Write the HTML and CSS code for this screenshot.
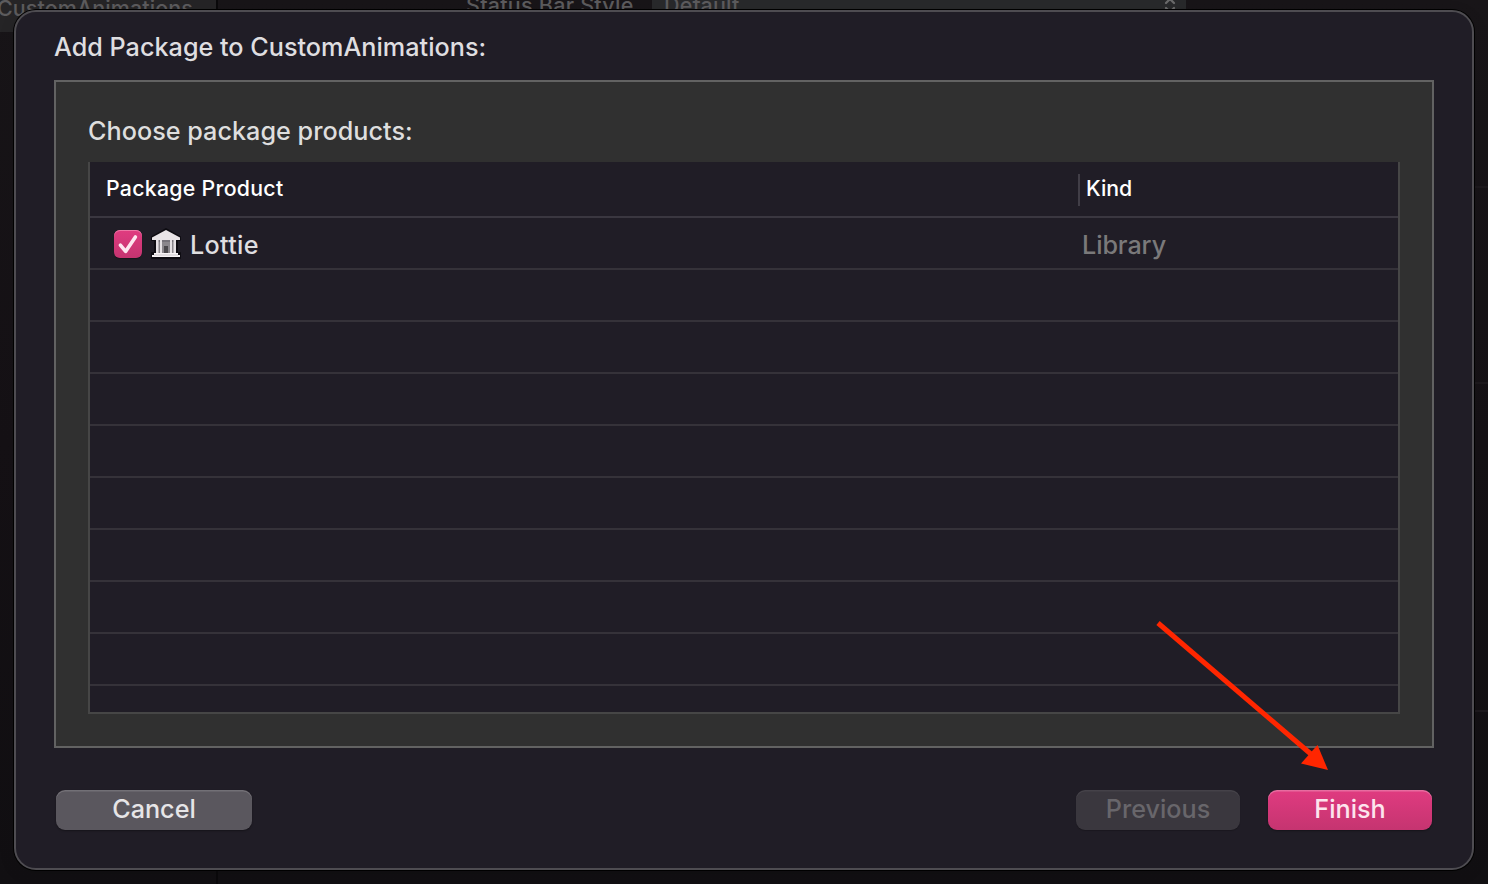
FILE: index.html
```html
<!DOCTYPE html>
<html lang="en">
<head>
<meta charset="utf-8">
<title>Add Package</title>
<link rel="stylesheet" href="styles.css">
</head>
<body>
<div class="backdrop" aria-hidden="true">
  <aside class="navigator"><div class="project"><span class="project-name">CustomAnimations</span></div></aside>
  <main class="editor">
    <span class="setting"><span class="setting-name">Status Bar Style</span></span>
    <div class="popup"><span class="popup-value">Default</span>
      <svg class="popup-arrows" width="12" height="22" viewBox="0 0 12 22" fill="none" stroke="#6a6a6b" stroke-width="2.2" stroke-linecap="round" stroke-linejoin="round"><path d="M2 7l4-4 4 4M2 12l4 4 4-4"/></svg>
    </div>
  </main>
  <aside class="inspector"><i></i><i></i><i></i></aside>
</div>
<section class="dialog">
  <h1 class="title"><span class="title-text">Add Package to CustomAnimations:</span></h1>
  <div class="panel">
    <h2 class="label"><span class="label-text">Choose package products:</span></h2>
    <div class="table">
      <div class="head">
        <div class="head-product"><span class="product-heading">Package Product</span></div>
        <div class="head-kind"><span class="kind-heading">Kind</span></div>
      </div>
      <div class="row">
        <div class="cell-product">
          <span class="checkbox"><svg width="28" height="28" viewBox="0 0 28 28" fill="none" stroke="#fde6ef" stroke-width="3.6" stroke-linecap="round" stroke-linejoin="round"><path d="M6.4 15.2l5.2 6.2L21.4 7"/></svg></span>
          <svg class="library" width="32" height="32" viewBox="0 0 32 32">
            <path d="M2 9L16 1l14 8v3h-3v13h3v5H2v-5h3V12H2z" fill="#0e0c12" stroke="#0e0c12" stroke-width="2" stroke-linejoin="round"/>
            <path d="M7 12h18v13H7z" fill="#8b878c"/>
            <path d="M7 12h18v2H7z" fill="#77737a"/>
            <path d="M14 18h4v7h-4z" fill="#4b484c"/>
            <path d="M6 12h2.500v13H6zM10 12h2v13h-2zM20 12h2v13h-2zM23.500 12H26v13h-2.500z" fill="#e6e1e4"/>
            <path d="M2 9.500L16 2l14 7.500V12H2z" fill="#e9e4e7"/>
            <path d="M4 25h24v2h2v2H2v-2h2z" fill="#f8f4f6"/>
            <path d="M4 27h24" stroke="#bbb6ba" stroke-width=".7"/>
          </svg>
          <span class="name">Lottie</span>
        </div>
        <div class="cell-kind"><span class="kind">Library</span></div>
      </div>
      <div class="row"></div><div class="row"></div><div class="row"></div><div class="row"></div>
      <div class="row"></div><div class="row"></div><div class="row"></div><div class="row"></div>
    </div>
  </div>
  <footer class="actions">
    <button class="button cancel"><span>Cancel</span></button>
    <button class="button previous" disabled><span>Previous</span></button>
    <button class="button finish"><span>Finish</span></button>
  </footer>
</section>
<svg class="pointer" width="176" height="152" viewBox="0 0 176 152"><path d="M4 4L158 136" stroke="#ff2600" stroke-width="5"/><path d="M174 151l-27-6.500L163.500 126z" fill="#ff2600"/></svg>
</body>
</html>
```
FILE: styles.css
```css
* { box-sizing: border-box; }
body {
  margin: 0;
  width: 1488px;
  height: 884px;
  overflow: hidden;
  position: relative;
  background: #161216;
  font-family: Inter, "Liberation Sans", sans-serif;
  font-size: 25.2px;
  font-weight: 450;
  line-height: 32px;
}
.backdrop {
  display: grid;
  grid-template-columns: 218px 1fr 14px;
  height: 884px;
  background: linear-gradient(#181518, #151115 50%, #110f12);
  color: #5c5b5d;
}
.navigator { border-right: 2px solid #0a090b; }
.project { height: 32px; background: #252426; }
.project-name {
  display: block;
  margin-left: -3px;
  line-height: 16px;
  font-size: 21.5px;
  font-weight: 500;
  letter-spacing: .08px;
  white-space: nowrap;
}
.editor { display: flex; align-items: flex-start; font-size: 21.5px; line-height: 11px; }
.setting { width: 434px; padding-left: 248px; letter-spacing: .25px; white-space: nowrap; }
.popup {
  display: flex;
  justify-content: space-between;
  width: 534px;
  height: 22px;
  padding: 0 10px 0 12px;
  background: #28292b;
}
.popup-value { letter-spacing: .2px; }
.popup-arrows { margin-top: -4px; }
.inspector { display: grid; grid-template-rows: 188px 196px 328px; }
.inspector i { border-bottom: 2px solid #1d191d; }
.dialog {
  position: absolute;
  left: 14px;
  top: 10px;
  width: 1460px;
  height: 860px;
  padding: 19px 38px 38px;
  border: 2px solid #4e4c51;
  border-radius: 22px;
  background: #201d26;
  box-shadow: 0 0 0 1px #000, 0 4px 16px rgba(0, 0, 0, .12);
  color: #dfdee0;
}
.title, .label { margin: 0; font-size: inherit; font-weight: inherit; }
.title { margin-bottom: 17px; }
.title-text { letter-spacing: .01px; }
.panel {
  height: 668px;
  padding: 33px 32px 32px;
  border: 2px solid #626262;
  background: #303030;
}
.label { margin-bottom: 15px; color: #dedede; }
.label-text { letter-spacing: .02px; }
.table {
  height: 552px;
  overflow: hidden;
  border: solid #464646;
  border-width: 0 2px 2px;
  background: #201d26;
}
.head {
  display: flex;
  align-items: center;
  height: 56px;
  padding-top: 2px;
  border-bottom: 2px solid #3a3740;
  color: #fff;
  font-size: 21.3px;
  font-weight: 500;
  line-height: 28px;
}
.head-product { width: 988px; padding: 0 0 4px 16px; }
.product-heading { letter-spacing: .28px; }
.head-kind { padding: 0 0 4px 6px; border-left: 2px solid #413e47; }
.row { display: flex; align-items: center; height: 52px; border-bottom: 2px solid #353239; }
.cell-product { display: flex; align-items: center; width: 992px; padding-left: 24px; }
.checkbox {
  width: 28px;
  height: 28px;
  margin-top: 2px;
  border-radius: 6px;
  background: linear-gradient(#e03c80, #c53470);
  box-shadow: inset 0 1px #ed78a6, 0 1px 1px rgba(0, 0, 0, .3);
}
.checkbox svg { display: block; }
.library { margin: 2px 8px 0; }
.name, .kind { padding-top: 3px; }
.name { letter-spacing: .3px; }
.kind { letter-spacing: -.1px; }
.cell-kind { padding-top: 3px; color: #7a797a; }
.actions { display: flex; gap: 28px; padding: 42px 2px 0; }
.button {
  height: 40px;
  width: 164px;
  padding: 0 0 3px;
  border: 0;
  border-radius: 9px;
  color: #e6e5e7;
  background: #5a575e;
  box-shadow: inset 0 1.5px rgba(255, 255, 255, .15), 0 1px 2px rgba(0, 0, 0, .35);
  font: inherit;
}
.cancel { width: 196px; margin-right: auto; }
.previous { color: #68666b; background: #3a373e; box-shadow: inset 0 1.5px rgba(255, 255, 255, .06), 0 1px 1px rgba(0, 0, 0, .2); }
.finish { color: #fde4ee; background: linear-gradient(#e03b80, #c53470); box-shadow: inset 0 1.5px rgba(255, 255, 255, .25), 0 1px 2px rgba(0, 0, 0, .35); }
.pointer { position: absolute; left: 1154px; top: 619px; }
```
